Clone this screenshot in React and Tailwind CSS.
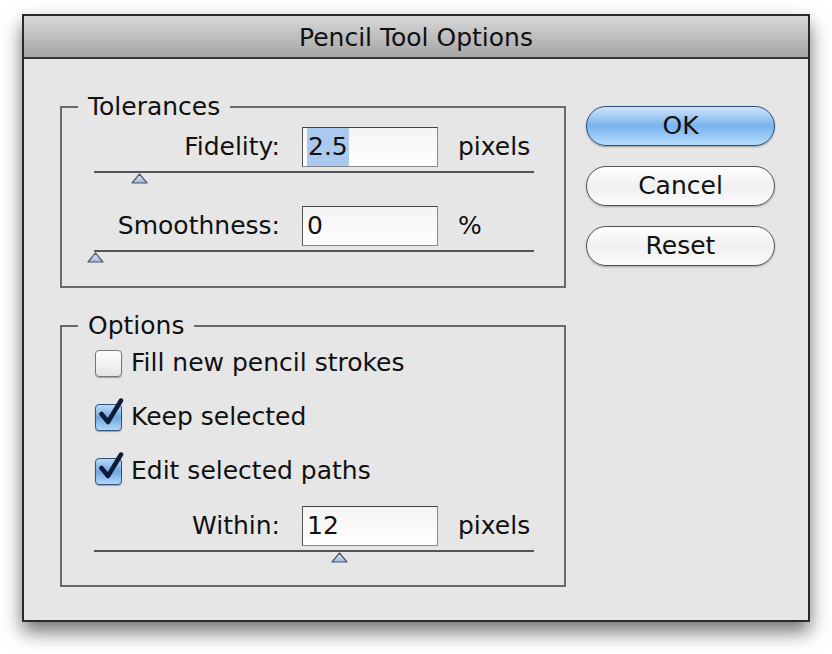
import React from 'react';

const font = { fontFamily: '"DejaVu Sans", "Liberation Sans", sans-serif' };

const Thumb = ({ left }) => (
    <svg
        className="absolute top-[2px]"
        style={{ left: left - 8 }}
        width="17"
        height="11"
        viewBox="0 0 17 11"
    >
        <defs>
            <linearGradient id="thumbFill" x1="0" y1="0" x2="0" y2="1">
                <stop offset="0" stopColor="#e6eefa" />
                <stop offset="1" stopColor="#9fb4d6" />
            </linearGradient>
        </defs>
        <path d="M8.5 1 L16 10 L1 10 Z" fill="url(#thumbFill)" stroke="#4a5a78" strokeWidth="1.2" strokeLinejoin="round" />
    </svg>
);

const Slider = ({ thumb }) => (
    <div className="relative ml-[32px] w-[440px] h-[16px]">
        <div className="h-[2px] bg-[#555]"></div>
        <Thumb left={thumb} />
    </div>
);

const NumberRow = ({ label, value, unit, selected }) => (
    <div className="flex items-center h-[40px]">
        <div className="w-[218px] text-right text-[25px] text-[#111]">{label}</div>
        <div className="ml-[22px] w-[136px] h-[40px] border border-[#888] border-t-[#444] border-l-[#555] bg-gradient-to-b from-[#f4f4f4] to-[#ffffff] flex items-center pl-[4px] text-[25px] text-[#111]">
            <span className={selected ? 'bg-[#a9c9ef] px-[1px]' : ''}>{value}</span>
        </div>
        <div className="ml-[20px] text-[25px] text-[#111]">{unit}</div>
    </div>
);

const Checkbox = ({ checked, label }) => (
    <div className="flex items-center h-[28px]">
        <div className="relative w-[27px] h-[27px]">
            {checked ? (
                <div className="w-[27px] h-[27px] rounded-[4px] border border-[#2f5580] bg-gradient-to-b from-[#bcd9f6] via-[#6fa7e2] to-[#b3d7f7] shadow-[0_1px_1px_rgba(0,0,0,0.3)]"></div>
            ) : (
                <div className="w-[27px] h-[27px] rounded-[4px] border border-[#777] bg-gradient-to-b from-[#ffffff] to-[#e4e4e4] shadow-[0_1px_1px_rgba(0,0,0,0.3)]"></div>
            )}
            {checked && (
                <svg className="absolute left-[3px] top-[-6px]" width="28" height="30" viewBox="0 0 28 30">
                    <path d="M3.5 16 L10 24 L23 2.5" fill="none" stroke="#0d1c38" strokeWidth="4.5" strokeLinecap="round" strokeLinejoin="round" />
                </svg>
            )}
        </div>
        <span className="ml-[9px] text-[25px] text-[#111]">{label}</span>
    </div>
);

const PillButton = ({ children, primary }) => (
    <button
        className={`w-[189px] h-[40px] rounded-full border text-[25px] text-[#111] flex items-center justify-center ${
            primary
                ? 'border-[#2d4f7a] bg-gradient-to-b from-[#cde4fa] via-[#79b3ee] to-[#b6dcfb] shadow-[0_1px_2px_rgba(0,0,0,0.35)]'
                : 'border-[#555] bg-gradient-to-b from-[#ffffff] via-[#f0f0f0] to-[#fbfbfb] shadow-[0_1px_2px_rgba(0,0,0,0.3)]'
        }`}
    >
        {children}
    </button>
);

const App = () => {
    return (
        <div className="w-[832px] h-[654px] bg-white pt-[14px] pl-[22px]" style={font}>
            <div className="w-[788px] h-[608px] border-2 border-[#2a2a2a] bg-[#e6e6e6] shadow-[0_10px_18px_rgba(0,0,0,0.55)] flex flex-col">
                <div className="h-[43px] pt-[2px] border-b-2 border-[#333] bg-gradient-to-b from-[#d8d8d8] to-[#a6a6a6] flex items-center justify-center text-[25px] text-[#111]">
                    Pencil Tool Options
                </div>

                <div className="flex pl-[36px] pt-[34px]">
                    <div className="flex flex-col">
                        {/* Tolerances */}
                        <fieldset className="w-[506px] h-[195px] border-2 border-[#6a6a6a]">
                            <legend className="ml-[16px] px-[10px] text-[25px] leading-[28px] text-[#111]">Tolerances</legend>
                            <div className="pt-[6px]">
                                <NumberRow label="Fidelity:" value="2.5" unit="pixels" selected />
                                <div className="mt-[4px]">
                                    <Slider thumb={45} />
                                </div>
                                <div className="mt-[19px]">
                                    <NumberRow label="Smoothness:" value="0" unit="%" />
                                </div>
                                <div className="mt-[4px]">
                                    <Slider thumb={1} />
                                </div>
                            </div>
                        </fieldset>

                        {/* Options */}
                        <fieldset className="mt-[24px] w-[506px] h-[275px] border-2 border-[#6a6a6a]">
                            <legend className="ml-[16px] px-[10px] text-[25px] leading-[28px] text-[#111]">Options</legend>
                            <div className="pl-[33px] pt-[9px] flex flex-col gap-[26px]">
                                <Checkbox label="Fill new pencil strokes" />
                                <Checkbox checked label="Keep selected" />
                                <Checkbox checked label="Edit selected paths" />
                            </div>
                            <div className="mt-[21px]">
                                <NumberRow label="Within:" value="12" unit="pixels" />
                            </div>
                            <div className="mt-[4px]">
                                <Slider thumb={245} />
                            </div>
                        </fieldset>
                    </div>

                    <div className="ml-[20px] mt-[13px] flex flex-col gap-[20px]">
                        <PillButton primary>OK</PillButton>
                        <PillButton>Cancel</PillButton>
                        <PillButton>Reset</PillButton>
                    </div>
                </div>
            </div>
        </div>
    );
};

export default App;
